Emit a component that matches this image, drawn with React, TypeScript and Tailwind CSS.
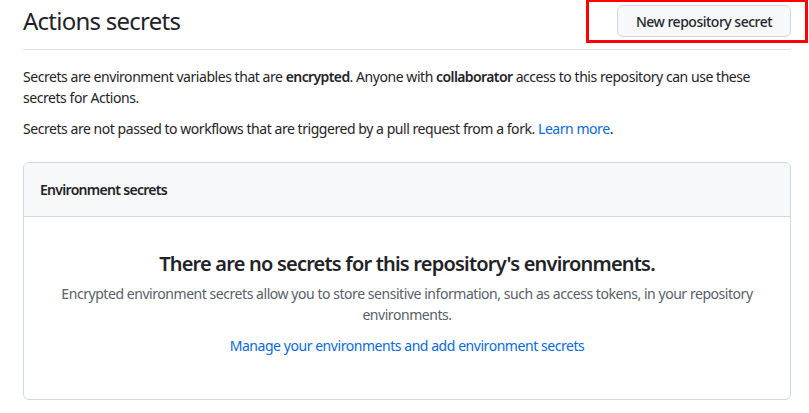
import React from 'react';

const App: React.FC = () => {
  return (
    <div className="relative min-h-screen bg-white text-[#1f2328] font-['Noto_Sans',sans-serif] tracking-[-0.45px]">
      <div className="pl-[23px] pr-[18px]">
        {/* Subhead */}
        <div className="flex items-center justify-between pt-[3px] pb-[10px] border-b border-[#d8dee4]">
          <h1 className="text-[24px] leading-[36px] font-normal tracking-[-0.75px]">Actions secrets</h1>
          <button className="h-[32px] w-[174px] text-[14px] font-medium rounded-md border border-[#d0d7de] bg-[#f6f8fa] text-[#24292f] tracking-[-0.5px]">
            New repository secret
          </button>
        </div>

        <p className="mt-4 text-[14px] leading-[21px]">
          Secrets are environment variables that are <strong className="font-semibold tracking-[-0.6px]">encrypted</strong>. Anyone with{' '}
          <strong className="font-semibold tracking-[-0.6px]">collaborator</strong> access to this repository can use these secrets for Actions.
        </p>
        <p className="mt-[10px] text-[14px] leading-[21px]">
          Secrets are not passed to workflows that are triggered by a pull request from a fork.{' '}
          <a href="#" className="text-[#0969da]">Learn more</a>.
        </p>

        {/* Environment secrets box */}
        <div className="mt-[23px] border border-[#d0d7de] rounded-md overflow-hidden">
          <div className="bg-[#f6f8fa] border-b border-[#d0d7de] px-4 py-4 text-[14px] leading-[21px] font-semibold tracking-[-0.7px]">
            Environment secrets
          </div>
          <div className="px-8 pt-8 pb-[43px] text-center">
            <h3 className="text-[20px] leading-[30px] font-semibold tracking-[-0.8px]">
              There are no secrets for this repository's environments.
            </h3>
            <p className="mt-[4px] text-[14px] leading-[21px] text-[#57606a]">
              Encrypted environment secrets allow you to store sensitive information, such as access tokens, in your repository environments.
            </p>
            <p className="mt-[10px] text-[14px] leading-[21px]">
              <a href="#" className="text-[#0969da]">Manage your environments and add environment secrets</a>
            </p>
          </div>
        </div>
      </div>

      {/* annotation */}
      <div className="absolute left-[586px] top-[-1px] w-[222px] h-[44px] border-[3px] border-[#ff0000]" />
    </div>
  );
};

export default App;
